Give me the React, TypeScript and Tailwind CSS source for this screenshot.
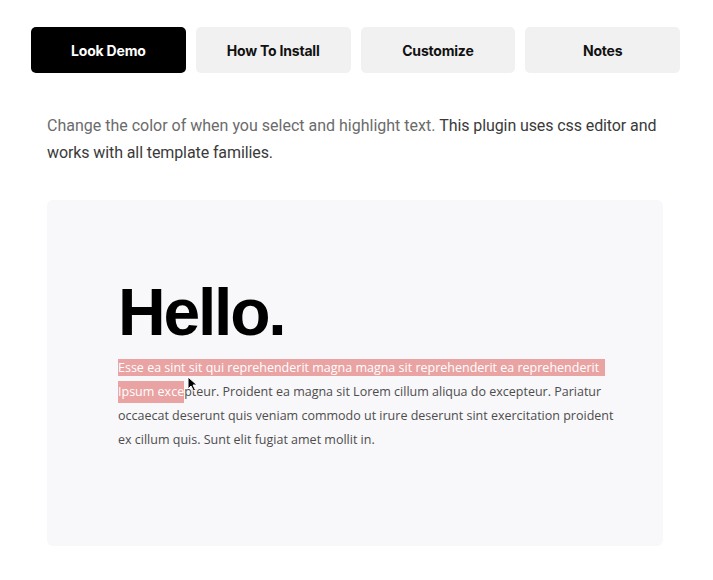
import React from 'react';

const tabs = ['Look Demo', 'How To Install', 'Customize', 'Notes'];

const Cursor = () => (
  <svg className="absolute left-[69px] top-[20px]" width="11" height="16" viewBox="0 0 11 16">
    <path d="M1 1 L1 13 L4 10 L6.5 15 L8.5 14 L6 9 L10 9 Z" fill="#000" stroke="#fff" strokeWidth="1" />
  </svg>
);

export default function App() {
  const hl = 'bg-[#e9a3a3] text-white';
  return (
    <div className="w-[713px] h-[580px] bg-white overflow-hidden pt-[27px] px-[31px]">
      <div className="flex gap-[10px]" style={{ fontFamily: 'Inter, sans-serif' }}>
        {tabs.map((t, i) => (
          <div
            key={t}
            className={`w-[154.75px] h-[46px] rounded-[5px] flex items-center justify-center text-[14px] font-bold tracking-[-0.2px] ${
              i === 0 ? 'bg-black text-white' : 'bg-[#f1f1f1] text-[#111]'
            }`}
          >
            {t}
          </div>
        ))}
      </div>

      <p
        className="mt-[39px] ml-[16px] text-[16px] leading-[27px] text-[#6b6b6b]"
        style={{ fontFamily: 'Roboto, sans-serif' }}
      >
        Change the color of when you select and highlight text.{' '}
        <span className="text-[#3a3a3a] tracking-[-0.1px]">This plugin uses css editor and</span>
        <br />
        <span className="text-[#3a3a3a] tracking-[-0.1px]">works with all template families.</span>
      </p>

      <div className="mt-[34px] ml-[16px] w-[616px] h-[346px] rounded-[6px] bg-[#f8f7fa] pl-[71px] pt-[77px]">
        <h1
          className="text-[66px] leading-[70px] font-bold tracking-[-2.2px] text-black"
          style={{ fontFamily: '"Liberation Sans", Arial, sans-serif' }}
        >
          Hello.
        </h1>
        <div
          className="relative mt-[9px] text-[12.5px] leading-[24px] text-[#4d4d4d] whitespace-nowrap"
          style={{ fontFamily: '"Open Sans", sans-serif' }}
        >
          <span className={`${hl} pr-[6px]`}>Esse ea sint sit qui reprehenderit magna magna sit reprehenderit ea reprehenderit</span>
          <br />
          <span className={`${hl} inline-block leading-[22px] -mt-[2px]`}>Ipsum exce</span>pteur. Proident ea magna sit Lorem cillum aliqua do excepteur. Pariatur
          <br />
          occaecat deserunt quis veniam commodo ut irure deserunt sint exercitation proident
          <br />
          ex cillum quis. Sunt elit fugiat amet mollit in.
          <Cursor />
        </div>
      </div>
    </div>
  );
}
